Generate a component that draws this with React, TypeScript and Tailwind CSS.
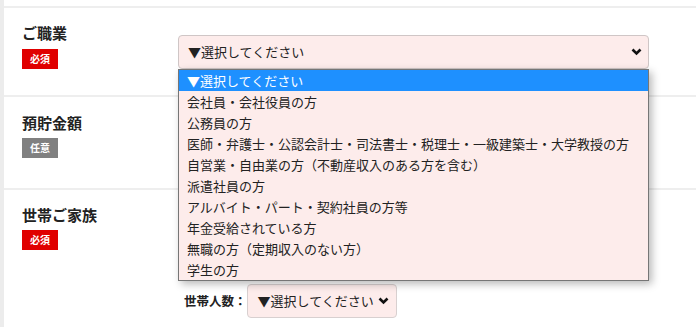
import React from "react";

const FONT = "font-['Noto_Sans_CJK_JP','Noto_Sans',sans-serif]";

const OPTIONS = [
  "▼選択してください",
  "会社員・会社役員の方",
  "公務員の方",
  "医師・弁護士・公認会計士・司法書士・税理士・一級建築士・大学教授の方",
  "自営業・自由業の方（不動産収入のある方を含む）",
  "派遣社員の方",
  "アルバイト・パート・契約社員の方等",
  "年金受給されている方",
  "無職の方（定期収入のない方）",
  "学生の方",
];

const Chevron = () => (
  <svg width="11" height="8" viewBox="0 0 11 8" className="shrink-0">
    <path d="M1.5 1.5 L5.5 5.5 L9.5 1.5" fill="none" stroke="#111" strokeWidth="2.6" />
  </svg>
);

const Badge: React.FC<{ required?: boolean }> = ({ required }) => (
  <span
    className={
      "flex h-[20px] w-[36px] items-center justify-center text-[10px] font-bold leading-none text-white " +
      (required ? "bg-[#e00000]" : "bg-[#808080]")
    }
  >
    {required ? "必須" : "任意"}
  </span>
);

const Label: React.FC<{ title: string; required?: boolean; gap: string; pt: string }> = ({
  title,
  required,
  gap,
  pt,
}) => (
  <div className={"flex w-[174px] shrink-0 flex-col items-start pl-[18px] " + pt + " " + gap}>
    <div className="text-[15px] font-bold leading-[20px] text-[#222]">{title}</div>
    <Badge required={required} />
  </div>
);

export default function App() {
  return (
    <div className={"flex h-[327px] w-[696px] overflow-hidden bg-white " + FONT}>
      <div className="w-[4px] shrink-0 bg-[#ececec]" />
      <div className="relative flex-1">
        <div className="h-[8px] border-b-2 border-[#eeeeee]" />

        <section className="flex h-[89px] border-b-2 border-[#eeeeee]">
          <Label title="ご職業" required pt="pt-[15px]" gap="gap-[6px]" />
          <div className="pt-[27px]">
            <div className="flex h-[34px] w-[471px] items-center justify-between rounded-[4px] border border-[#cfc6c6] bg-[#fdeceb] pl-[9px] pr-[6px] text-[13px] text-[#222]">
              <span>▼選択してください</span>
              <Chevron />
            </div>
          </div>
        </section>

        <section className="flex h-[93px] border-b-2 border-[#eeeeee]">
          <Label title="預貯金額" pt="pt-[16px]" gap="gap-[5px]" />
        </section>

        <section className="flex flex-1">
          <Label title="世帯ご家族" required pt="pt-[15px]" gap="gap-[5px]" />
          <div className="pt-[94px]">
            <div className="flex items-center">
              <span className="pl-[6px] text-[12.5px] font-bold text-[#222]">世帯人数：</span>
              <div className="flex h-[34px] w-[150px] items-center justify-between rounded-[4px] border border-[#d8d0d0] bg-[#fdeceb] pl-[10px] pr-[7px] text-[13px] text-[#222]">
                <span>▼選択してください</span>
                <Chevron />
              </div>
            </div>
          </div>
        </section>

        <ul className="absolute left-[174px] top-[69px] w-[471px] border border-[#767676] bg-[#fdeceb] text-[13px] text-[#222] shadow-[3px_3px_8px_rgba(0,0,0,0.28)]">
          {OPTIONS.map((o, i) => (
            <li
              key={o}
              className={
                "flex h-[21px] items-center whitespace-nowrap px-[8px] leading-none " +
                (i === 0 ? "bg-[#1e90ff] text-white" : "")
              }
            >
              {o}
            </li>
          ))}
        </ul>
      </div>
    </div>
  );
}
